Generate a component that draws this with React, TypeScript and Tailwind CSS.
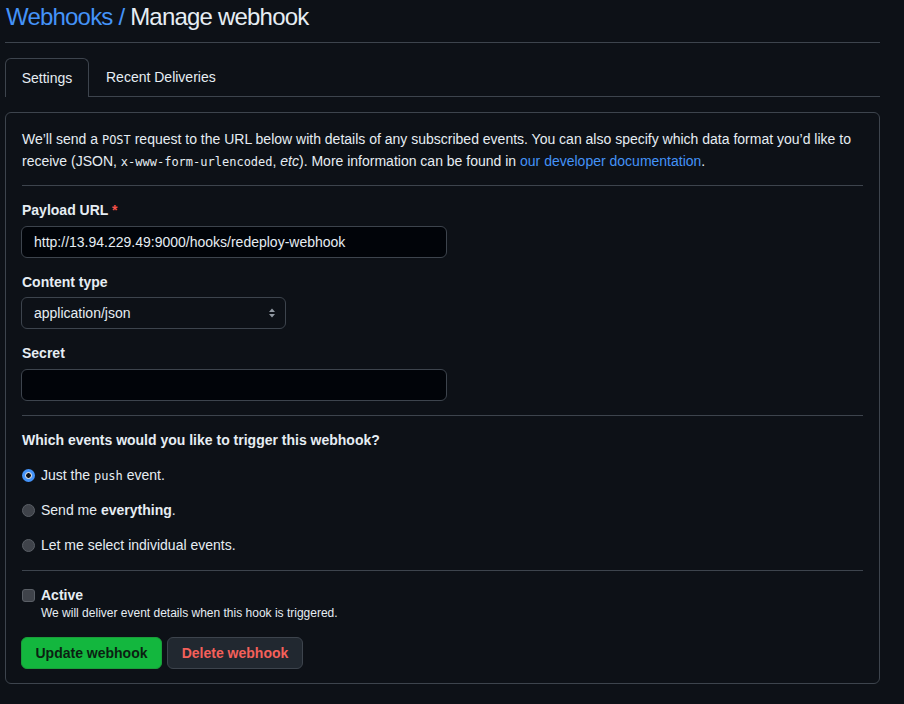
import React from "react";

const sans = { fontFamily: "'Liberation Sans', Arial, sans-serif" };
const mono = { fontFamily: "'DejaVu Sans Mono', 'Liberation Mono', monospace" };

function Radio({ checked }: { checked?: boolean }) {
  if (checked) {
    return (
      <span className="w-[13px] h-[13px] rounded-full bg-[#4493f8] flex items-center justify-center shrink-0">
        <span className="w-[7px] h-[7px] rounded-full bg-[#0d1117] border-[1.5px] border-white" />
      </span>
    );
  }
  return <span className="w-[13px] h-[13px] rounded-full bg-[#3f434a] border border-[#5a5f66] shrink-0" />;
}

export default function App() {
  return (
    <div className="w-[904px] h-[704px] overflow-hidden bg-[#0d1117] text-[#e6edf3]" style={sans}>
      <div className="w-[875px] ml-[5px]">
        {/* Header */}
        <div className="h-[43px] border-b border-[#3d444d] pt-[2px]">
          <h1 className="text-[24px] leading-[30px] font-normal ml-[1px] tracking-[-0.8px]">
            <span className="text-[#4493f8]">Webhooks /</span> Manage webhook
          </h1>
        </div>

        {/* Tabs */}
        <div className="mt-[15px] flex border-b border-[#3d444d] h-[39px]">
          <div className="w-[84px] h-[39px] pt-px border border-[#3d444d] border-b-0 rounded-t-md bg-[#0d1117] flex items-center justify-center text-[14px] -mb-px">
            Settings
          </div>
          <div className="h-[38px] pt-px flex items-center pl-[17px] text-[14px]">Recent Deliveries</div>
        </div>

        {/* Box */}
        <div className="mt-[15px] border border-[#3d444d] rounded-md p-4 pb-[14px]">
          <p className="text-[14px] leading-[21px] h-[42px]">
            We’ll send a{" "}
            <code className="text-[12px]" style={mono}>
              POST
            </code>{" "}
            request to the URL below with details of any subscribed events. You can also specify which data format you’d like to receive (JSON,{" "}
            <code className="text-[12px]" style={mono}>
              x-www-form-urlencoded
            </code>
            , <em>etc</em>). More information can be found in{" "}
            <span className="text-[#4493f8]">our developer documentation</span>.
          </p>
          <div className="mt-[14px] border-t border-[#3d444d]" />

          <div className="mt-[14px] text-[14px] leading-[20px] font-bold">
            Payload URL <span className="text-[#f85149]">*</span>
          </div>
          <div className="mt-[6px] w-[426px] h-[32px] -ml-px rounded-md border border-[#3d444d] bg-[#010409] flex items-center px-3 text-[14px]">
            http://13.94.229.49:9000/hooks/redeploy-webhook
          </div>

          <div className="mt-[14px] text-[14px] leading-[20px] font-bold">Content type</div>
          <div className="mt-[5px] w-[265px] h-[32px] -ml-px rounded-md border border-[#3d444d] bg-[#0d1117] flex items-center justify-between pl-3 pr-[9px] text-[14px]">
            <span>application/json</span>
            <svg width="8" height="12" viewBox="0 0 8 12" className="text-[#9198a1]">
              <path d="M4 1.5 L7 5 H1 Z" fill="currentColor" />
              <path d="M4 10.5 L7 7 H1 Z" fill="currentColor" />
            </svg>
          </div>

          <div className="mt-[14px] text-[14px] leading-[20px] font-bold">Secret</div>
          <div className="mt-[6px] w-[426px] h-[32px] -ml-px rounded-md border border-[#3d444d] bg-[#010409]" />

          <div className="mt-[14px] border-t border-[#3d444d]" />

          <div className="mt-[14px] text-[14px] leading-[20px] font-bold">Which events would you like to trigger this webhook?</div>
          <div className="mt-[15px] flex flex-col gap-[15px] text-[14px] leading-[20px]">
            <div className="flex items-center gap-[6px] h-[20px]">
              <Radio checked />
              <span>
                Just the{" "}
                <code className="text-[12px]" style={mono}>
                  push
                </code>{" "}
                event.
              </span>
            </div>
            <div className="flex items-center gap-[6px] h-[20px]">
              <Radio />
              <span>
                Send me <strong className="font-bold">everything</strong>.
              </span>
            </div>
            <div className="flex items-center gap-[6px] h-[20px]">
              <Radio />
              <span>Let me select individual events.</span>
            </div>
          </div>

          <div className="mt-[15px] border-t border-[#3d444d]" />

          <div className="mt-[14px] flex gap-[6px]">
            <span className="mt-[4px] w-[13px] h-[13px] rounded-[3px] bg-[#3f434a] border border-[#5a5f66] shrink-0" />
            <div>
              <div className="text-[14px] leading-[20px] font-bold">Active</div>
              <div className="text-[12px] leading-[16px]">We will deliver event details when this hook is triggered.</div>
            </div>
          </div>

          <div className="mt-[16px] flex gap-[5px] -ml-px">
            <div className="h-[32px] w-[141px] justify-center rounded-md bg-[#13b73e] border border-[#1a9e3a] flex items-center text-[14px] font-bold text-[#0b1f12]">
              Update webhook
            </div>
            <div className="h-[32px] w-[136px] justify-center rounded-md bg-[#212830] border border-[#3d444d] flex items-center text-[14px] font-bold text-[#f4605a]">
              Delete webhook
            </div>
          </div>
        </div>
      </div>
    </div>
  );
}
